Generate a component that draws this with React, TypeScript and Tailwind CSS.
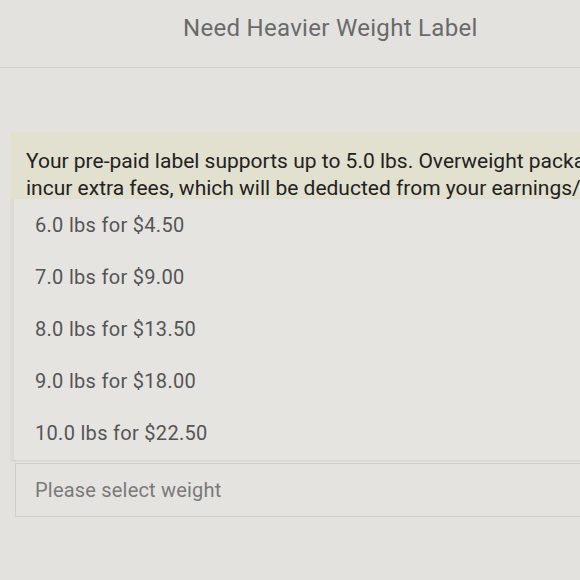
import React from "react";

export default function App() {
  const options = [
    "6.0 lbs for $4.50",
    "7.0 lbs for $9.00",
    "8.0 lbs for $13.50",
    "9.0 lbs for $18.00",
    "10.0 lbs for $22.50",
  ];
  return (
    <div
      className="w-[580px] h-[580px] overflow-hidden bg-[#e3e2df] flex flex-col"
      style={{ fontFamily: "Roboto, 'Noto Sans', sans-serif" }}
    >
      <div className="h-[68px] border-b border-[#d2d1ce] flex items-start pt-[13px] pl-[183px]">
        <span className="text-[24px] leading-[30px] tracking-[0.3px] text-[#6a6a6a] whitespace-nowrap">
          Need Heavier Weight Label
        </span>
      </div>
      <div className="h-[64px]" />
      <div className="ml-[10px] w-[570px] h-[67px] overflow-hidden bg-[#e2e0cf] pt-[16px] pl-[16px]">
        <p className="text-[21px] leading-[27px] text-[#222222] whitespace-nowrap">
          Your pre-paid label supports up to 5.0 lbs. Overweight packages can
          <br />
          incur extra fees, which will be deducted from your earnings/
        </p>
      </div>
      <div className="ml-[11px] w-[600px] bg-[#e5e4e1] border-l-[3px] border-[#dcdbd8] pb-[1px] shadow-[0_1px_2px_rgba(0,0,0,0.08)]">
        {options.map((o) => (
          <div
            key={o}
            className="h-[52px] flex items-center pl-[21px] text-[20px] tracking-[0.3px] text-[#555555] whitespace-nowrap"
          >
            {o}
          </div>
        ))}
      </div>
      <div className="ml-[15px] mt-[3px] w-[600px] h-[54px] border border-[#cfcecb] bg-[#e4e3e0] flex items-center pl-[19px]">
        <span className="text-[20px] tracking-[0.2px] text-[#7a7a7a]">Please select weight</span>
      </div>
    </div>
  );
}
